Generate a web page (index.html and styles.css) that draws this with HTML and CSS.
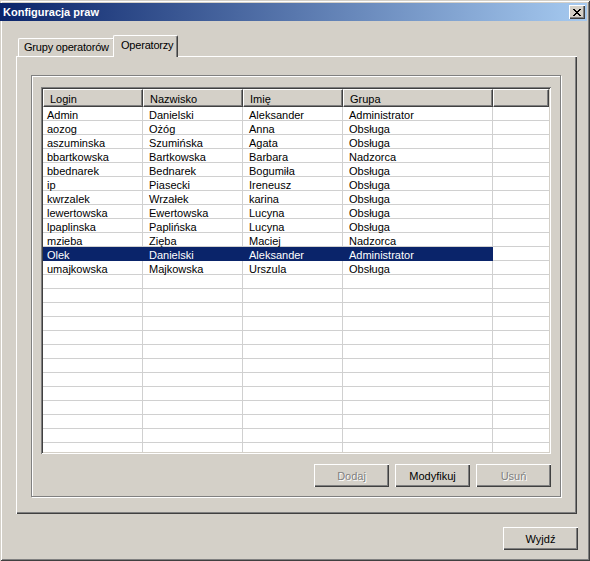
FILE: index.html
```html
<!DOCTYPE html>
<html lang="pl">
<head>
<meta charset="utf-8">
<title>Konfiguracja praw</title>
<link rel="stylesheet" href="styles.css">
</head>
<body>
<div class="window">
  <div class="titlebar">
    <span class="title">Konfiguracja praw</span>
    <button class="close" aria-label="Zamknij"><svg width="8" height="7" viewBox="0 0 8 7" shape-rendering="crispEdges"><path fill="#000" d="M0 0h2v1H0zM6 0h2v1H6zM1 1h2v1H1zM5 1h2v1H5zM2 2h4v1H2zM3 3h2v1H3zM2 4h4v1H2zM1 5h2v1H1zM5 5h2v1H5zM0 6h2v1H0zM6 6h2v1H6z"/></svg></button>
  </div>
  <div class="content">
    <div class="tabs">
      <div class="tab">Grupy operatorów</div>
      <div class="tab active">Operatorzy</div>
    </div>
    <div class="panel">
      <div class="frame">
        <div class="grid">
          <div class="head">
            <div class="hcell c1">Login</div>
            <div class="hcell c2">Nazwisko</div>
            <div class="hcell c3">Imię</div>
            <div class="hcell c4">Grupa</div>
            <div class="hcell c5"></div>
          </div>
          <div class="body">
            <div class="row"><div class="cell c1">Admin</div><div class="cell c2">Danielski</div><div class="cell c3">Aleksander</div><div class="cell c4">Administrator</div><div class="cell c5"></div></div>
            <div class="row"><div class="cell c1">aozog</div><div class="cell c2">Ożóg</div><div class="cell c3">Anna</div><div class="cell c4">Obsługa</div><div class="cell c5"></div></div>
            <div class="row"><div class="cell c1">aszuminska</div><div class="cell c2">Szumińska</div><div class="cell c3">Agata</div><div class="cell c4">Obsługa</div><div class="cell c5"></div></div>
            <div class="row"><div class="cell c1">bbartkowska</div><div class="cell c2">Bartkowska</div><div class="cell c3">Barbara</div><div class="cell c4">Nadzorca</div><div class="cell c5"></div></div>
            <div class="row"><div class="cell c1">bbednarek</div><div class="cell c2">Bednarek</div><div class="cell c3">Bogumiła</div><div class="cell c4">Obsługa</div><div class="cell c5"></div></div>
            <div class="row"><div class="cell c1">ip</div><div class="cell c2">Piasecki</div><div class="cell c3">Ireneusz</div><div class="cell c4">Obsługa</div><div class="cell c5"></div></div>
            <div class="row"><div class="cell c1">kwrzalek</div><div class="cell c2">Wrzałek</div><div class="cell c3">karina</div><div class="cell c4">Obsługa</div><div class="cell c5"></div></div>
            <div class="row"><div class="cell c1">lewertowska</div><div class="cell c2">Ewertowska</div><div class="cell c3">Lucyna</div><div class="cell c4">Obsługa</div><div class="cell c5"></div></div>
            <div class="row"><div class="cell c1">lpaplinska</div><div class="cell c2">Paplińska</div><div class="cell c3">Lucyna</div><div class="cell c4">Obsługa</div><div class="cell c5"></div></div>
            <div class="row"><div class="cell c1">mzieba</div><div class="cell c2">Zięba</div><div class="cell c3">Maciej</div><div class="cell c4">Nadzorca</div><div class="cell c5"></div></div>
            <div class="row sel"><div class="cell c1">Olek</div><div class="cell c2">Danielski</div><div class="cell c3">Aleksander</div><div class="cell c4">Administrator</div><div class="cell c5"></div></div>
            <div class="row"><div class="cell c1">umajkowska</div><div class="cell c2">Majkowska</div><div class="cell c3">Urszula</div><div class="cell c4">Obsługa</div><div class="cell c5"></div></div>
            <div class="row"><div class="cell c1"></div><div class="cell c2"></div><div class="cell c3"></div><div class="cell c4"></div><div class="cell c5"></div></div>
            <div class="row"><div class="cell c1"></div><div class="cell c2"></div><div class="cell c3"></div><div class="cell c4"></div><div class="cell c5"></div></div>
            <div class="row"><div class="cell c1"></div><div class="cell c2"></div><div class="cell c3"></div><div class="cell c4"></div><div class="cell c5"></div></div>
            <div class="row"><div class="cell c1"></div><div class="cell c2"></div><div class="cell c3"></div><div class="cell c4"></div><div class="cell c5"></div></div>
            <div class="row"><div class="cell c1"></div><div class="cell c2"></div><div class="cell c3"></div><div class="cell c4"></div><div class="cell c5"></div></div>
            <div class="row"><div class="cell c1"></div><div class="cell c2"></div><div class="cell c3"></div><div class="cell c4"></div><div class="cell c5"></div></div>
            <div class="row"><div class="cell c1"></div><div class="cell c2"></div><div class="cell c3"></div><div class="cell c4"></div><div class="cell c5"></div></div>
            <div class="row"><div class="cell c1"></div><div class="cell c2"></div><div class="cell c3"></div><div class="cell c4"></div><div class="cell c5"></div></div>
            <div class="row"><div class="cell c1"></div><div class="cell c2"></div><div class="cell c3"></div><div class="cell c4"></div><div class="cell c5"></div></div>
            <div class="row"><div class="cell c1"></div><div class="cell c2"></div><div class="cell c3"></div><div class="cell c4"></div><div class="cell c5"></div></div>
            <div class="row"><div class="cell c1"></div><div class="cell c2"></div><div class="cell c3"></div><div class="cell c4"></div><div class="cell c5"></div></div>
            <div class="row"><div class="cell c1"></div><div class="cell c2"></div><div class="cell c3"></div><div class="cell c4"></div><div class="cell c5"></div></div>
            <div class="row"><div class="cell c1"></div><div class="cell c2"></div><div class="cell c3"></div><div class="cell c4"></div><div class="cell c5"></div></div>
          </div>
        </div>
        <div class="actions">
          <button class="btn" disabled>Dodaj</button>
          <button class="btn">Modyfikuj</button>
          <button class="btn" disabled>Usuń</button>
        </div>
      </div>
    </div>
    <div class="footer">
      <button class="btn">Wyjdź</button>
    </div>
  </div>
</div>
</body>
</html>
```

FILE: styles.css
```css
* { box-sizing: border-box; }
html, body { margin: 0; padding: 0; }
body {
  background: #d4d0c8;
  font-family: "Liberation Sans", Arial, sans-serif;
  font-size: 11px;
  color: #000;
}

.window {
  width: 590px;
  height: 561px;
  background: #d4d0c8;
  padding-top: 3px;
  overflow: hidden;
  box-shadow: inset 1px 1px 0 #d4d0c8, inset -1px -1px 0 #404040,
              inset 2px 2px 0 #fff, inset -2px -2px 0 #808080;
}

.titlebar {
  height: 18px;
  margin-right: 3px;
  background: linear-gradient(to right, #0a246a, #a6caf0);
  display: flex;
  align-items: center;
  justify-content: space-between;
  padding: 0 2px 0 3px;
}
.title {
  color: #fff;
  font-weight: bold;
  font-size: 11px;
  line-height: 14px;
}
.close {
  width: 16px;
  height: 14px;
  padding: 0;
  margin: 0;
  border: none;
  background: #d4d0c8;
  box-shadow: inset 1px 1px 0 #fff, inset -1px -1px 0 #404040, inset -2px -2px 0 #808080;
  display: flex;
  align-items: center;
  justify-content: center;
}
.close svg { display: block; margin-left: -1px; }

.content {
  padding: 14px 12px 0 16px;
}

.tabs {
  display: flex;
  align-items: flex-end;
  height: 21px;
  padding-left: 2px;
}
.tab {
  width: 97px;
  height: 18px;
  border-top: 1px solid #fff;
  border-left: 1px solid #fff;
  border-right: 1px solid #404040;
  border-radius: 2px 2px 0 0;
  box-shadow: inset -1px 0 0 #808080;
  padding: 1px 0 0 5px;
  line-height: 14px;
  letter-spacing: -0.2px;
  white-space: nowrap;
  background: #d4d0c8;
}
.tab.active {
  width: 65px;
  height: 22px;
  margin-left: -2px;
  margin-bottom: -1px;
  position: relative;
  z-index: 1;
  padding: 2px 0 0 7px;
}

.panel {
  height: 458px;
  margin-right: 1px;
  padding: 19px 16px 0 15px;
  box-shadow: inset 1px 1px 0 #fff, inset -1px -1px 0 #404040, inset -2px -2px 0 #808080;
}

.frame {
  height: 422px;
  border: 1px solid #808080;
  box-shadow: inset 1px 1px 0 #fff, 1px 1px 0 #fff;
  padding: 11px 9px 9px 9px;
}

.grid {
  height: 367px;
  background: #fff;
  padding: 2px;
  box-shadow: inset 1px 1px 0 #808080, inset -1px -1px 0 #fff,
              inset 2px 2px 0 #404040, inset -2px -2px 0 #d4d0c8;
}
.head {
  display: flex;
  height: 18px;
}
.hcell {
  height: 18px;
  background: #d4d0c8;
  border-top: 1px solid #fff;
  border-left: 1px solid #fff;
  border-right: 1px solid #404040;
  border-bottom: 1px solid #404040;
  box-shadow: inset -1px -1px 0 #808080;
  padding: 2px 0 0 6px;
  line-height: 14px;
  white-space: nowrap;
}
.c1, .c2, .c3 { width: 100px; flex: none; }
.c4 { width: 150px; flex: none; }
.c5 { flex: 1; }

.body {
  height: 345px;
  overflow: hidden;
}
.row {
  display: flex;
  height: 14px;
}
.cell {
  height: 14px;
  border-right: 1px solid #d0d0d0;
  border-bottom: 1px solid #d0d0d0;
  padding: 2px 0 0 6px;
  line-height: 13px;
  white-space: nowrap;
}
.cell.c1 { padding-left: 4px; }
.cell.c5 { border-right: none; }
.row.sel .cell:not(.c5) {
  background: #0a246a;
  color: #fff;
  border-color: #0a246a;
}

.actions {
  display: flex;
  justify-content: flex-end;
  gap: 6px;
  margin-top: 10px;
}
.btn {
  width: 75px;
  height: 23px;
  padding: 0;
  margin: 0;
  border: none;
  background: #d4d0c8;
  box-shadow: inset 1px 1px 0 #fff, inset -1px -1px 0 #404040, inset -2px -2px 0 #808080;
  font-family: "Liberation Sans", Arial, sans-serif;
  font-size: 11px;
  color: #000;
}
.btn:disabled {
  color: #808080;
  text-shadow: 1px 1px 0 #fff;
}

.footer {
  display: flex;
  justify-content: flex-end;
  margin-top: 13px;
}
```
